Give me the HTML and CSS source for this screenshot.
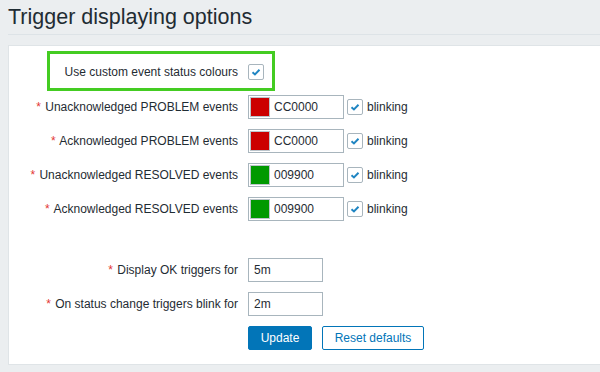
FILE: index.html
```html
<!DOCTYPE html>
<html lang="en">
<head>
    <meta charset="UTF-8">
    <title>Trigger displaying options</title>
    <link rel="stylesheet" href="styles.css">
</head>
<body>
    <header class="page-header">
        <h1>Trigger displaying options</h1>
    </header>

    <div class="form-box">
        <form class="form">
            <div class="row row-first">
                <div class="highlight"></div>
                <label class="label">Use custom event status colours</label>
                <div class="field">
                    <span class="checkbox"><svg viewBox="0 0 16 16"><path d="M4 8.2 L6.8 10.8 L12 5.4"/></svg></span>
                </div>
            </div>

            <div class="row">
                <label class="label"><span class="req">*</span> Unacknowledged PROBLEM events</label>
                <div class="field">
                    <span class="color-input"><span class="swatch red"></span>CC0000</span>
                    <span class="checkbox"><svg viewBox="0 0 16 16"><path d="M4 8.2 L6.8 10.8 L12 5.4"/></svg></span>
                    <span class="cb-text">blinking</span>
                </div>
            </div>

            <div class="row">
                <label class="label"><span class="req">*</span> Acknowledged PROBLEM events</label>
                <div class="field">
                    <span class="color-input"><span class="swatch red"></span>CC0000</span>
                    <span class="checkbox"><svg viewBox="0 0 16 16"><path d="M4 8.2 L6.8 10.8 L12 5.4"/></svg></span>
                    <span class="cb-text">blinking</span>
                </div>
            </div>

            <div class="row">
                <label class="label"><span class="req">*</span> Unacknowledged RESOLVED events</label>
                <div class="field">
                    <span class="color-input"><span class="swatch green"></span>009900</span>
                    <span class="checkbox"><svg viewBox="0 0 16 16"><path d="M4 8.2 L6.8 10.8 L12 5.4"/></svg></span>
                    <span class="cb-text">blinking</span>
                </div>
            </div>

            <div class="row">
                <label class="label"><span class="req">*</span> Acknowledged RESOLVED events</label>
                <div class="field">
                    <span class="color-input"><span class="swatch green"></span>009900</span>
                    <span class="checkbox"><svg viewBox="0 0 16 16"><path d="M4 8.2 L6.8 10.8 L12 5.4"/></svg></span>
                    <span class="cb-text">blinking</span>
                </div>
            </div>

            <div class="spacer"></div>

            <div class="row">
                <label class="label"><span class="req">*</span> Display OK triggers for</label>
                <div class="field">
                    <span class="text-input">5m</span>
                </div>
            </div>

            <div class="row">
                <label class="label"><span class="req">*</span> On status change triggers blink for</label>
                <div class="field">
                    <span class="text-input">2m</span>
                </div>
            </div>

            <div class="row">
                <div class="label"></div>
                <div class="field buttons">
                    <button type="button" class="btn btn-main">Update</button>
                    <button type="button" class="btn btn-alt">Reset defaults</button>
                </div>
            </div>
        </form>
    </div>
</body>
</html>
```

FILE: styles.css
```css
body {
    margin: 0;
    padding: 0;
    background-color: #ebeef0;
    font-family: "Liberation Sans", Arial, sans-serif;
    font-size: 12px;
    color: #1f2c33;
}
.page-header {
    margin-left: 8px;
    height: 34px;
    border-bottom: 1px solid #dde3e7;
}
.page-header h1 {
    margin: 0;
    font-size: 21.5px;
    font-weight: normal;
    line-height: 34px;
    color: #1f2c33;
}
.form-box {
    margin: 10px 0 0 8px;
    background: #fff;
    border: 1px solid #dfe4e7;
    border-right: none;
    padding: 14px 0 14px 0;
}
.row {
    display: flex;
    align-items: center;
    gap: 10px;
    height: 24px;
    margin-bottom: 10px;
    position: relative;
}
.row:last-child {
    margin-bottom: 0;
}
.row-first {
    margin-bottom: 11px;
}
.highlight {
    position: absolute;
    left: 38px;
    top: -9px;
    width: 222px;
    height: 34px;
    border: 3px solid #44cc22;
}
.label {
    width: 229px;
    text-align: right;
    white-space: nowrap;
    flex-shrink: 0;
}
.req {
    color: #e33734;
    margin-right: 1px;
}
.field {
    display: flex;
    align-items: center;
}
.color-input {
    display: flex;
    align-items: center;
    box-sizing: border-box;
    width: 96px;
    height: 24px;
    border: 1px solid #a8b5bd;
    padding-left: 1px;
}
.swatch {
    box-sizing: border-box;
    width: 20px;
    height: 20px;
    border: 1px solid #bcc5cb;
    margin-right: 4px;
}
.swatch.red {
    background-color: #cc0000;
}
.swatch.green {
    background-color: #009900;
}
.checkbox {
    box-sizing: border-box;
    width: 16px;
    height: 16px;
    border: 1px solid #a8b5bd;
    border-radius: 2px;
    background: #fff;
    margin-left: 3px;
    display: flex;
}
.row-first .checkbox {
    margin-left: 0;
}
.checkbox svg {
    width: 14px;
    height: 14px;
}
.checkbox path {
    fill: none;
    stroke: #1f85c2;
    stroke-width: 2.2;
}
.cb-text {
    margin-left: 4px;
}
.text-input {
    box-sizing: border-box;
    width: 75px;
    height: 24px;
    line-height: 22px;
    border: 1px solid #a8b5bd;
    padding-left: 5px;
}
.spacer {
    height: 27px;
}
.buttons {
    gap: 10px;
}
.btn {
    box-sizing: border-box;
    height: 24px;
    padding: 0;
    border-radius: 2px;
    font-family: "Liberation Sans", Arial, sans-serif;
    font-size: 12px;
    cursor: pointer;
}
.btn-main {
    width: 64px;
    background-color: #0275b8;
    border: 1px solid #0275b8;
    color: #fff;
}
.btn-alt {
    width: 102px;
    background-color: #fff;
    border: 1px solid #0275b8;
    color: #0275b8;
}
```
